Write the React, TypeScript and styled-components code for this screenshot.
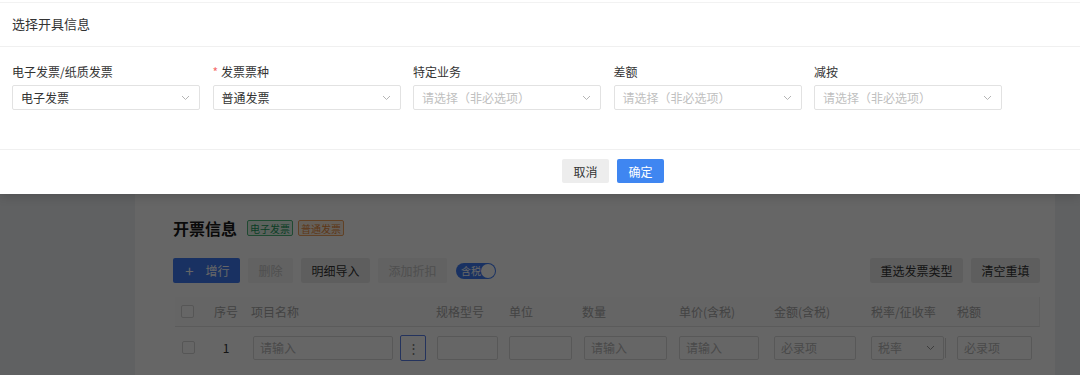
import React from 'react';
import styled, { createGlobalStyle } from 'styled-components';

const Global = createGlobalStyle`
  html, body { margin: 0; padding: 0; }
  body {
    font-family: "Noto Sans CJK SC", "Noto Sans", sans-serif;
    background: #f0f2f5;
    color: #333;
  }
  * { box-sizing: border-box; }
`;

const Screen = styled.div`
  position: relative;
  width: 1080px;
  height: 375px;
  overflow: hidden;
`;

/* ---------- background page ---------- */
const Page = styled.div`
  height: 375px;
  background: #f0f2f5;
  padding-top: 150px;
`;

const Card = styled.div`
  margin-left: 135px;
  width: 920px;
  height: 225px;
  background: #fff;
  padding: 67px 15px 0 38px;
`;

const TitleRow = styled.div`
  display: flex;
  align-items: center;
  height: 22px;
  gap: 5px;
`;

const CardTitle = styled.div`
  font-size: 16px;
  font-weight: 700;
  line-height: 22px;
  color: #1a1a1a;
  margin-right: 5px;
`;

const Tag = styled.span<{ $tone: 'green' | 'orange' }>`
  display: inline-flex;
  align-items: center;
  justify-content: center;
  width: 46px;
  height: 16px;
  font-size: 10px;
  border-radius: 2px;
  border: 1px solid ${p => (p.$tone === 'green' ? '#4fb67a' : '#f2a35e')};
  background: ${p => (p.$tone === 'green' ? '#e6f6ec' : '#fdf0e2')};
  color: ${p => (p.$tone === 'green' ? '#21995a' : '#e98a3c')};
`;

const Toolbar = styled.div`
  display: flex;
  align-items: center;
  justify-content: space-between;
  margin-top: 19px;
  height: 25px;
`;

const ToolGroup = styled.div`
  display: flex;
  align-items: center;
  gap: 8px;
`;

const ToolButton = styled.button<{ $variant?: 'primary' | 'default' | 'disabled' }>`
  height: 25px;
  padding: 0 10.5px;
  border: none;
  border-radius: 2px;
  font-family: inherit;
  font-size: 12px;
  display: inline-flex;
  align-items: center;
  gap: 10px;
  background: ${p =>
    p.$variant === 'primary' ? '#3f7cf6' : p.$variant === 'disabled' ? '#f4f4f4' : '#ececec'};
  color: ${p =>
    p.$variant === 'primary' ? '#fff' : p.$variant === 'disabled' ? '#c6c6c6' : '#333'};
`;

const Plus = styled.span`
  font-size: 15px;
  line-height: 1;
  width: 12px;
  text-align: center;
`;

const Switch = styled.div`
  position: relative;
  width: 40px;
  height: 16px;
  border-radius: 8px;
  background: #3f7cf6;
  color: #fff;
  font-size: 10px;
  line-height: 16px;
  padding-left: 5px;
  margin-left: 1px;
`;

const Knob = styled.span`
  position: absolute;
  right: 1px;
  top: 1px;
  width: 14px;
  height: 14px;
  border-radius: 50%;
  background: #fff;
`;

const Table = styled.div`
  margin-top: 13.5px;
  margin-left: 2px;
  width: 865px;
`;

const GRID = '30px 42px 146px 43px 73px 73px 97px 95px 97px 86px 83px';

const HeadRow = styled.div`
  display: grid;
  grid-template-columns: ${GRID};
  height: 30px;
  align-items: center;
  background: #fcfcfc;
  border-bottom: 1px solid #e4e4e4;
  border-right: 1px solid #eee;
`;

const HeadCell = styled.div<{ $pad?: number; $center?: boolean }>`
  font-size: 12px;
  color: #a8a8a8;
  padding-left: ${p => p.$pad ?? 0}px;
  text-align: ${p => (p.$center ? 'center' : 'left')};
  white-space: nowrap;
`;

const BodyRow = styled.div`
  display: grid;
  grid-template-columns: ${GRID};
  align-items: center;
  height: 37px;
  padding-top: 5px;
`;

const BodyCell = styled.div<{ $pad?: number; $center?: boolean }>`
  display: flex;
  align-items: center;
  justify-content: ${p => (p.$center ? 'center' : 'flex-start')};
  padding-left: ${p => p.$pad ?? 0}px;
  font-size: 12px;
`;

const Check = styled.span`
  width: 13px;
  height: 13px;
  border: 1px solid #d6d6d6;
  border-radius: 2px;
  background: #fff;
`;

const RowInput = styled.div<{ $w: number }>`
  width: ${p => p.$w}px;
  height: 24px;
  border: 1px solid #dcdcdc;
  border-radius: 2px;
  font-size: 12px;
  line-height: 22px;
  color: #b8b8b8;
  padding-left: 6px;
  display: flex;
  align-items: center;
  justify-content: space-between;
  padding-right: 8px;
`;

const MoreButton = styled.div`
  width: 26px;
  height: 26px;
  border: 1px solid #5b7fe8;
  border-radius: 2px;
  display: flex;
  align-items: center;
  justify-content: center;
  color: #777;
  font-size: 13px;
  background: #fff;
`;

const SelectWrap = styled.div`
  display: flex;
  align-items: center;
  gap: 1px;
`;

const Sep = styled.span`
  width: 1px;
  height: 20px;
  background: #d8d8d8;
`;

/* ---------- overlay & modal ---------- */
const Overlay = styled.div`
  position: absolute;
  inset: 0;
  background: rgba(0, 0, 0, 0.6);
`;

const Modal = styled.div`
  position: absolute;
  left: 0;
  top: 0;
  width: 100%;
  background: #fff;
  padding-top: 2px;
  box-shadow: 0 2px 10px rgba(0, 0, 0, 0.18);
`;

const ModalHeader = styled.div`
  height: 45px;
  border-top: 1px solid #f2f2f2;
  border-bottom: 1px solid #f0f0f0;
  display: flex;
  align-items: center;
  padding: 0 12px 3px;
  font-size: 13px;
  color: #333;
`;

const ModalBody = styled.div`
  height: 102px;
  padding: 16px 0 0 12px;
  display: grid;
  grid-template-columns: repeat(5, 188px);
  column-gap: 12.5px;
  align-content: start;
`;

const Field = styled.div`
  display: flex;
  flex-direction: column;
  gap: 4px;
`;

const Label = styled.div`
  font-size: 12px;
  line-height: 18px;
  color: #333;
  white-space: nowrap;
`;

const Star = styled.span`
  color: #f56c6c;
  margin-right: 3px;
`;

const Select = styled.div<{ $placeholder?: boolean }>`
  height: 25px;
  border: 1px solid #e2e2e2;
  border-radius: 2px;
  display: flex;
  align-items: center;
  justify-content: space-between;
  padding: 0 9px 0 8px;
  font-size: 12px;
  color: ${p => (p.$placeholder ? '#c0c0c0' : '#333')};
`;

const ModalFooter = styled.div`
  height: 45px;
  border-top: 1px solid #f0f0f0;
  display: flex;
  justify-content: center;
  align-items: flex-start;
  padding: 9px 0 0 146px;
  gap: 8px;
`;

const FooterButton = styled.button<{ $primary?: boolean }>`
  width: 47px;
  height: 24px;
  border: none;
  border-radius: 2px;
  font-family: inherit;
  font-size: 12px;
  background: ${p => (p.$primary ? '#3f86f1' : '#ededed')};
  color: ${p => (p.$primary ? '#fff' : '#333')};
`;

const Chevron: React.FC<{ color?: string }> = ({ color = '#b5b5b5' }) => (
  <svg width="9" height="6" viewBox="0 0 9 6" fill="none">
    <polyline points="1,1 4.5,4.5 8,1" stroke={color} strokeWidth="1" fill="none" />
  </svg>
);

const fields = [
  { label: '电子发票/纸质发票', value: '电子发票' },
  { label: '发票票种', value: '普通发票', required: true },
  { label: '特定业务', placeholder: '请选择（非必选项）' },
  { label: '差额', placeholder: '请选择（非必选项）' },
  { label: '减按', placeholder: '请选择（非必选项）' },
];

export default function App() {
  return (
    <Screen>
      <Global />
      <Page>
        <Card>
          <TitleRow>
            <CardTitle>开票信息</CardTitle>
            <Tag $tone="green">电子发票</Tag>
            <Tag $tone="orange">普通发票</Tag>
          </TitleRow>
          <Toolbar>
            <ToolGroup>
              <ToolButton $variant="primary">
                <Plus>+</Plus>增行
              </ToolButton>
              <ToolButton $variant="disabled">删除</ToolButton>
              <ToolButton>明细导入</ToolButton>
              <ToolButton $variant="disabled">添加折扣</ToolButton>
              <Switch>
                含税
                <Knob />
              </Switch>
            </ToolGroup>
            <ToolGroup>
              <ToolButton>重选发票类型</ToolButton>
              <ToolButton>清空重填</ToolButton>
            </ToolGroup>
          </Toolbar>
          <Table>
            <HeadRow>
              <BodyCell $pad={6}>
                <Check />
              </BodyCell>
              <HeadCell $center>序号</HeadCell>
              <HeadCell $pad={4}>项目名称</HeadCell>
              <HeadCell />
              <HeadCell>规格型号</HeadCell>
              <HeadCell>单位</HeadCell>
              <HeadCell>数量</HeadCell>
              <HeadCell>单价(含税)</HeadCell>
              <HeadCell>金额(含税)</HeadCell>
              <HeadCell>税率/征收率</HeadCell>
              <HeadCell>税额</HeadCell>
            </HeadRow>
            <BodyRow>
              <BodyCell $pad={7}>
                <Check />
              </BodyCell>
              <BodyCell $center>1</BodyCell>
              <BodyCell $pad={6}>
                <RowInput $w={141}>请输入</RowInput>
              </BodyCell>
              <BodyCell $pad={7}>
                <MoreButton>⋮</MoreButton>
              </BodyCell>
              <BodyCell $pad={1}>
                <RowInput $w={61} />
              </BodyCell>
              <BodyCell>
                <RowInput $w={63} />
              </BodyCell>
              <BodyCell $pad={2}>
                <RowInput $w={83}>请输入</RowInput>
              </BodyCell>
              <BodyCell>
                <RowInput $w={80}>请输入</RowInput>
              </BodyCell>
              <BodyCell>
                <RowInput $w={82}>必录项</RowInput>
              </BodyCell>
              <BodyCell>
                <SelectWrap>
                  <RowInput $w={73}>
                    税率
                    <Chevron color="#999" />
                  </RowInput>
                  <Sep />
                </SelectWrap>
              </BodyCell>
              <BodyCell>
                <RowInput $w={75}>必录项</RowInput>
              </BodyCell>
            </BodyRow>
          </Table>
        </Card>
      </Page>
      <Overlay />
      <Modal>
        <ModalHeader>选择开具信息</ModalHeader>
        <ModalBody>
          {fields.map(f => (
            <Field key={f.label}>
              <Label>
                {f.required && <Star>*</Star>}
                {f.label}
              </Label>
              <Select $placeholder={!f.value}>
                <span>{f.value ?? f.placeholder}</span>
                <Chevron />
              </Select>
            </Field>
          ))}
        </ModalBody>
        <ModalFooter>
          <FooterButton>取消</FooterButton>
          <FooterButton $primary>确定</FooterButton>
        </ModalFooter>
      </Modal>
    </Screen>
  );
}
